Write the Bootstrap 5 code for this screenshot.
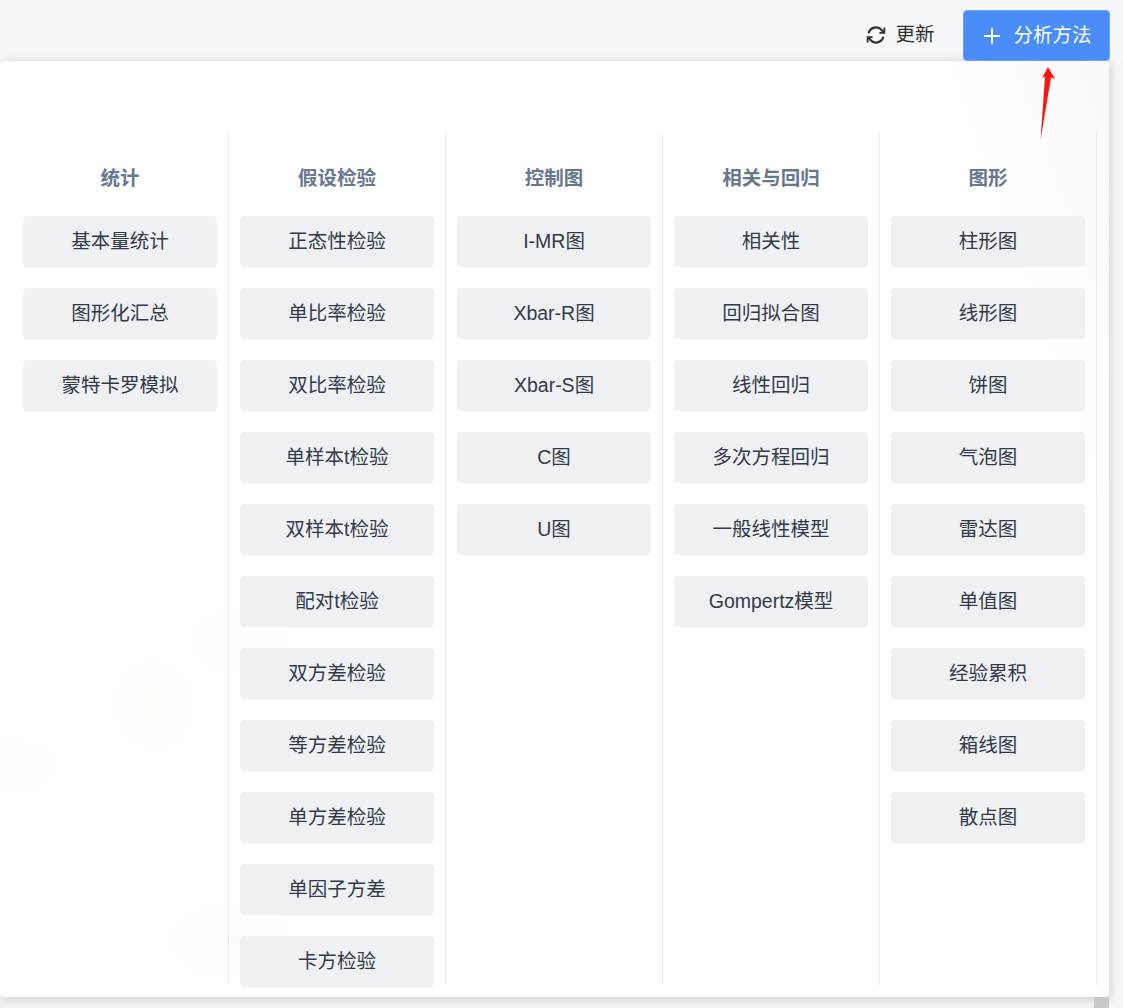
<!DOCTYPE html>
<html lang="zh">
<head>
<meta charset="utf-8">
<title>分析方法</title>
<link rel="stylesheet" href="https://cdn.jsdelivr.net/npm/bootstrap@5.3.0/dist/css/bootstrap.min.css">
<style>
html,body{height:1008px;overflow:hidden}
body{background:#f5f6f8;font-family:"Liberation Sans","Noto Sans CJK SC",sans-serif;font-size:19.5px;color:#303133;position:relative}
.top-strip{height:60px;padding:10px 13px 0 0;background:linear-gradient(#f7f8fa,#f8f9fb)}
.refresh-btn{height:50px;width:97px;margin-right:14px;color:#303133;font-size:19.5px;padding:0;border:0;background:transparent}
.refresh-btn svg{width:20px;height:20px;margin-right:1px}
.add-btn{height:51px;width:147px;background:#4b8df8;color:#fff;border:1px solid #6da1f8;border-radius:4px;font-size:19.5px;padding:0 0 0 2px;position:relative;z-index:2}
.add-btn svg{width:18px;height:18px}
.add-btn:hover{background:#4b8df8;color:#fff}
.panel{width:1109px;height:937px;padding:72px 0 0 12px;border-radius:4px;border-top:1px solid #e4e7ed;
background:
radial-gradient(ellipse 50px 55px at 155px 644px,rgba(255,247,235,.3),transparent),
radial-gradient(ellipse 60px 35px at 10px 705px,rgba(252,251,246,.5),transparent),
radial-gradient(ellipse 70px 50px at 240px 580px,rgba(255,251,245,.35),transparent),
radial-gradient(ellipse 70px 45px at 230px 880px,rgba(248,249,251,.5),transparent),
linear-gradient(250deg,#f9f9fa 0,#fff 12%,#fff 100%);
box-shadow:0 2px 12px rgba(0,0,0,.18)}
.method-col{width:217px;height:852px;padding:0 11px 0 10.8px;border-right:1px solid #e9ebef;flex:none}
.method-title{height:83px;padding-top:27px;text-align:center;font-size:19.5px;font-weight:700;color:#67778e;line-height:36px}
.method-btn{display:block;width:194.5px;height:51px;margin-bottom:21px;padding:0;background:#f0f1f3;color:#303a4b;border:0;border-radius:4px;font-size:19.5px;line-height:51px;text-align:center}
.method-btn:hover{background:#f0f1f3;color:#303a4b}
.arrow-mark{position:absolute;left:1035px;top:64px;width:26px;height:78px}
.scroll-thumb{position:absolute;left:1094px;top:997px;width:15px;height:11px;background:#c9c9c9}
</style>
</head>
<body>
<div class="top-strip d-flex justify-content-end align-items-start">
  <button type="button" class="btn refresh-btn d-inline-flex align-items-center gap-2 justify-content-center">
    <svg viewBox="0 0 20 20" fill="none" stroke="#303133" stroke-width="2.2"><path d="M2.6 8.2A7.6 7.6 0 0 1 15.8 5.2L17.6 7.2"/><path d="M18.4 2.6V7.8H13.4" stroke-width="1.8"/><path d="M17.4 11.8A7.6 7.6 0 0 1 4.2 14.8L2.4 12.8"/><path d="M1.6 17.4V12.2H6.6" stroke-width="1.8"/></svg>
    <span>更新</span>
  </button>
  <button type="button" class="btn add-btn d-inline-flex align-items-center justify-content-center gap-2">
    <svg viewBox="0 0 18 18" fill="none" stroke="#fff" stroke-width="2"><path d="M9 1V17M1 9H17"/></svg>
    <span class="ms-1">分析方法</span>
  </button>
</div>
<div class="panel d-flex">
  <div class="method-col">
    <div class="method-title">统计</div>
    <a class="btn method-btn">基本量统计</a><a class="btn method-btn">图形化汇总</a><a class="btn method-btn">蒙特卡罗模拟</a>
  </div>
  <div class="method-col">
    <div class="method-title">假设检验</div>
    <a class="btn method-btn">正态性检验</a><a class="btn method-btn">单比率检验</a><a class="btn method-btn">双比率检验</a><a class="btn method-btn">单样本t检验</a><a class="btn method-btn">双样本t检验</a><a class="btn method-btn">配对t检验</a><a class="btn method-btn">双方差检验</a><a class="btn method-btn">等方差检验</a><a class="btn method-btn">单方差检验</a><a class="btn method-btn">单因子方差</a><a class="btn method-btn">卡方检验</a>
  </div>
  <div class="method-col">
    <div class="method-title">控制图</div>
    <a class="btn method-btn">I-MR图</a><a class="btn method-btn">Xbar-R图</a><a class="btn method-btn">Xbar-S图</a><a class="btn method-btn">C图</a><a class="btn method-btn">U图</a>
  </div>
  <div class="method-col">
    <div class="method-title">相关与回归</div>
    <a class="btn method-btn">相关性</a><a class="btn method-btn">回归拟合图</a><a class="btn method-btn">线性回归</a><a class="btn method-btn">多次方程回归</a><a class="btn method-btn">一般线性模型</a><a class="btn method-btn">Gompertz模型</a>
  </div>
  <div class="method-col">
    <div class="method-title">图形</div>
    <a class="btn method-btn">柱形图</a><a class="btn method-btn">线形图</a><a class="btn method-btn">饼图</a><a class="btn method-btn">气泡图</a><a class="btn method-btn">雷达图</a><a class="btn method-btn">单值图</a><a class="btn method-btn">经验累积</a><a class="btn method-btn">箱线图</a><a class="btn method-btn">散点图</a>
  </div>
</div>
<svg class="arrow-mark" viewBox="0 0 26 78"><path d="M13 3 L20 15 L16 13.500 L5.500 76 L10 12.500 L7 14 Z" fill="#fb1410"/></svg>
<div class="scroll-thumb"></div>
</body>
</html>
